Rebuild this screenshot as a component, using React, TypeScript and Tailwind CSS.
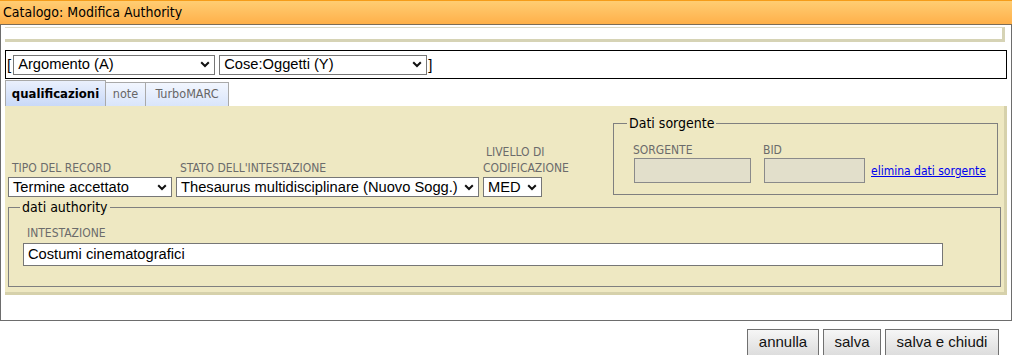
import React from "react";

const tahoma = "font-['Tahoma','DejaVu_Sans_Condensed','Noto_Sans',sans-serif]";
const arial = "font-['Arial','Liberation_Sans',sans-serif]";

function Chevron() {
  return (
    <svg width="10" height="7" viewBox="0 0 10 7" className="shrink-0">
      <path d="M1.2 1.2 L5 5 L8.8 1.2" fill="none" stroke="#111" strokeWidth="2" />
    </svg>
  );
}

interface SelProps {
  text: string;
  className: string;
}

function Sel({ text, className }: SelProps) {
  return (
    <div
      className={`flex items-center justify-between h-[20px] border border-[#767676] bg-white pl-[4px] pr-[4px] text-[14.7px] leading-none text-black ${arial} ${className}`}
    >
      <span className="whitespace-nowrap">{text}</span>
      <Chevron />
    </div>
  );
}

function Label({ children, className = "" }: { children: React.ReactNode; className?: string }) {
  return (
    <div className={`text-[12px] leading-[14px] text-[#6b6b6b] uppercase whitespace-nowrap ${tahoma} ${className}`}>
      {children}
    </div>
  );
}

export default function App() {
  return (
    <div className="w-[1012px] h-[355px] bg-white overflow-hidden">
      {/* title bar */}
      <div
        className={`h-[25px] border-t border-t-[#f59c1a] border-b border-b-[#7c6d58] bg-gradient-to-b from-[#ffcd72] to-[#ffb049] pl-[3px] text-[14px] leading-[22px] text-black ${tahoma}`}
      >
        Catalogo: Modifica Authority
      </div>

      <div className="h-[296px] border-x border-b border-[#6d6d6d] pl-[4px] pt-[2px]">
        {/* empty top bar */}
        <div className="w-[1000px] h-[15px] border-t border-t-[#dedbc8] border-r-[3px] border-r-[#d6d3b5] border-b-[3px] border-b-[#d6d3b5] bg-white" />

        {/* argument selects */}
        <div className="mt-[8px] w-[1002px] h-[29px] border border-black flex items-center pl-[1px] text-[15px] leading-none">
          <span className={`${arial} mr-[2px]`}>[</span>
          <Sel text="Argomento (A)" className="w-[202px]" />
          <Sel text="Cose:Oggetti (Y)" className="w-[208px] ml-[4px]" />
          <span className={`${arial} ml-[1px]`}>]</span>
        </div>

        {/* tabs */}
        <div className={`mt-[1px] flex items-end h-[26px] ${tahoma}`}>
          <div className="h-[26px] w-[101px] border border-b-0 border-[#a9a9a9] bg-gradient-to-b from-[#eaf0fd] to-[#c9d9f8] flex items-center justify-center text-[13px] font-bold text-black">
            qualificazioni
          </div>
          <div className="h-[24px] w-[40px] border border-b-0 border-l-0 border-[#a9a9a9] bg-gradient-to-b from-[#f2f6fe] to-[#d9e5fb] flex items-center justify-center text-[12.5px] text-[#666]">
            note
          </div>
          <div className="h-[24px] w-[83px] border border-b-0 border-l-0 border-[#a9a9a9] bg-gradient-to-b from-[#f2f6fe] to-[#d9e5fb] flex items-center justify-center text-[12.5px] text-[#666]">
            TurboMARC
          </div>
        </div>

        {/* panel */}
        <div className="w-[1002px] h-[189px] bg-[#eee8c2] border-r-[3px] border-b-[3px] border-[#d6d1ab] pl-[3px] pt-[9px]">
          <div className="flex items-end">
            <div className="w-[605px] flex items-end">
              <div className="flex flex-col">
                <Label className="pl-[4px]">Tipo del record</Label>
                <Sel text="Termine accettato" className="w-[164px] mt-[2px]" />
              </div>
              <div className="flex flex-col ml-[4px]">
                <Label className="pl-[4px]">Stato dell'intestazione</Label>
                <Sel text="Thesaurus multidisciplinare (Nuovo Sogg.)" className="w-[303px] mt-[2px]" />
              </div>
              <div className="flex flex-col ml-[4px]">
                <Label className="pl-[3px] mb-[2px]">Livello di</Label>
                <Label>Codificazione</Label>
                <Sel text="MED" className="w-[59px] mt-[2px]" />
              </div>
            </div>

            <fieldset className="mb-[2px] w-[385px] h-[80px] border border-[#7f7f7f]">
              <legend className={`ml-[13px] px-[2px] text-[14px] leading-[17px] text-black ${tahoma}`}>Dati sorgente</legend>
              <div className="flex items-end mt-[11px] pl-[19px]">
                <div className="flex flex-col">
                  <Label>Sorgente</Label>
                  <div className="mt-[1px] ml-[1px] w-[117px] h-[25px] border border-[#8a8a8a] bg-[#e2dfcb]" />
                </div>
                <div className="flex flex-col ml-[12px]">
                  <Label>Bid</Label>
                  <div className="mt-[1px] ml-[1px] w-[101px] h-[25px] border border-[#8a8a8a] bg-[#e2dfcb]" />
                </div>
                <a href="#" className={`ml-[6px] mb-[3px] whitespace-nowrap text-[12px] text-[#0000ee] underline ${tahoma}`}>
                  elimina dati sorgente
                </a>
              </div>
            </fieldset>
          </div>

          <fieldset className="mt-[2px] w-[993px] h-[88px] border border-[#7f7f7f]">
            <legend className={`ml-[11px] px-[2px] text-[14px] leading-[17px] text-black ${tahoma}`}>dati authority</legend>
            <div className="pl-[14px]">
              <Label className="mt-[10px] pl-[4px]">Intestazione</Label>
              <div className={`mt-[3px] w-[920px] h-[23px] border border-[#767676] bg-white pl-[4px] flex items-center text-[14.7px] text-black ${arial}`}>
                Costumi cinematografici
              </div>
            </div>
          </fieldset>
        </div>
      </div>

      {/* buttons */}
      <div className={`mt-[8px] flex justify-end gap-[4px] pr-[13px] text-[15px] ${arial}`}>
        <button className="w-[72px] h-[27px] border border-[#707070] bg-gradient-to-b from-[#f6f6f6] to-[#dddddd] text-[#111]">
          annulla
        </button>
        <button className="w-[58px] h-[27px] border border-[#707070] bg-gradient-to-b from-[#f6f6f6] to-[#dddddd] text-[#111]">
          salva
        </button>
        <button className="w-[114px] h-[27px] border border-[#707070] bg-gradient-to-b from-[#f6f6f6] to-[#dddddd] text-[#111]">
          salva e chiudi
        </button>
      </div>
    </div>
  );
}
